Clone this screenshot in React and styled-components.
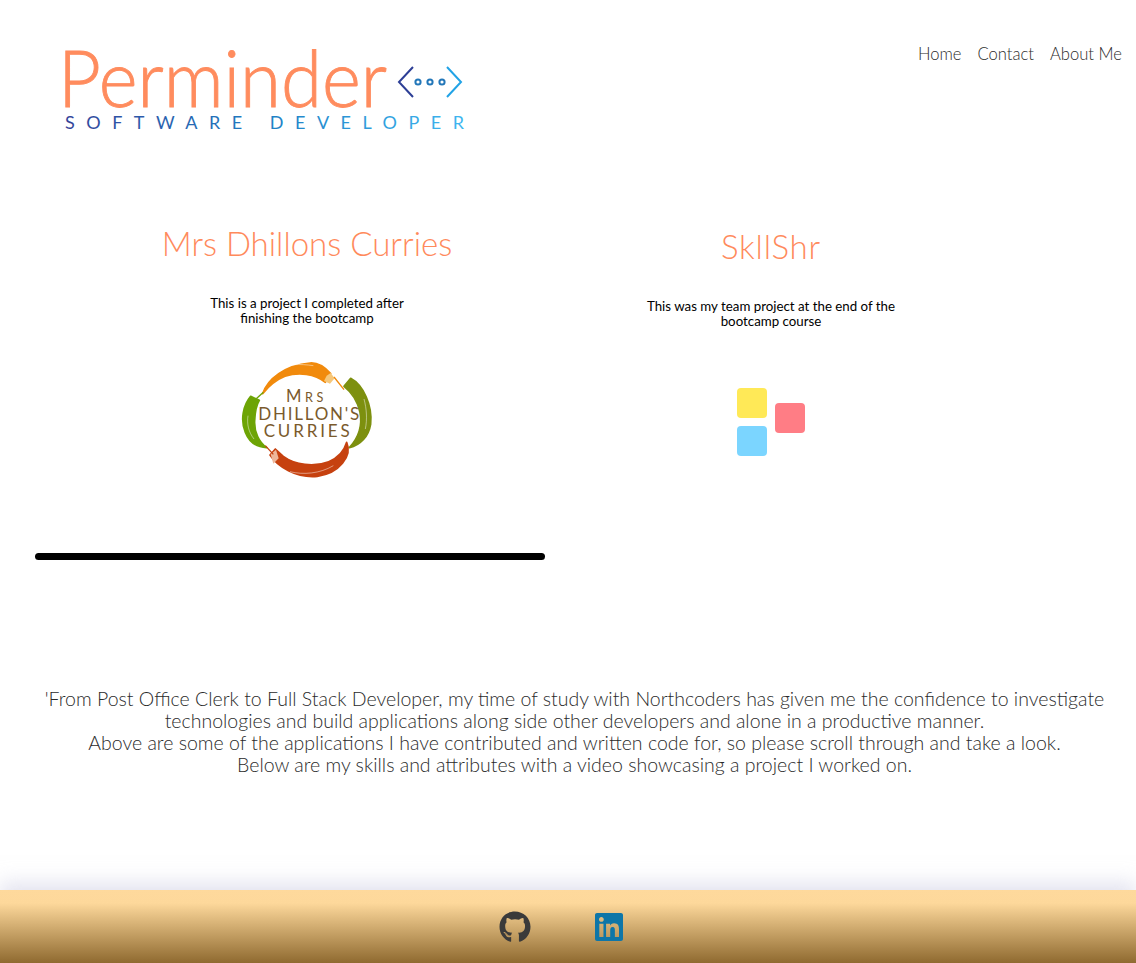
import React from "react";
import styled, { createGlobalStyle } from "styled-components";
import { FaGithub, FaLinkedin } from "react-icons/fa";

const Global = createGlobalStyle`
  html, body { margin: 0; padding: 0; background: #fff; }
  body { font-family: Lato, "Open Sans", "Liberation Sans", sans-serif; }
`;
const Page = styled.div`
  width: 1136px; height: 963px; display: flex; flex-direction: column; overflow: hidden;
`;
const Header = styled.header`
  display: flex; justify-content: space-between; align-items: flex-start;
  padding: 20px 14px 0 50px; height: 143px; box-sizing: border-box; flex: none;
`;
const Nav = styled.nav`
  display: flex; gap: 16px; margin-top: 24px;
`;
const NavLink = styled.a`
  font-size: 16.6px; font-weight: 300; line-height: 21px; color: #2b2b2b;
`;
const Track = styled.section`
  display: flex; align-items: center; padding-left: 75px; margin-top: 78px; flex: none;
`;
const Slide = styled.article`
  width: 464px; display: flex; flex-direction: column; align-items: center; text-align: center;
`;
const Title = styled.h2`
  margin: 0 0 31px; font-size: 33px; line-height: 44px; font-weight: 300; color: #ff8a5c;
  letter-spacing: ${(p) => p.$spacing || 0}px;
`;
const Blurb = styled.p`
  margin: 0; width: 280px; font-size: 13.3px; line-height: 15px; color: #000; font-weight: 400;
`;
const Figure = styled.div`
  height: ${(p) => p.$h}px; margin-top: 23px; display: flex; align-items: center; justify-content: center;
`;
const Scrollbar = styled.div`
  margin: 64px 0 0 35px; height: 7px; flex: none;
`;
const Thumb = styled.div`
  width: 510px; height: 7px; border-radius: 4px; background: #000;
`;
const Intro = styled.p`
  margin: 128px 20px 0 33px; flex: none; text-align: center; font-size: 19.5px; line-height: 22px;
  font-weight: 300; color: #2b2b2b; white-space: nowrap;
`;
const Footer = styled.footer`
  margin-top: auto; height: 73px; flex: none; display: flex; justify-content: center; align-items: center;
  gap: 62px; padding-right: 12px; box-sizing: border-box;
  background: linear-gradient(#fed99c 0%, #fdd89b 18%, #8f6a30 100%);
  box-shadow: 0 -8px 18px rgba(205, 205, 228, 0.55);
  color: #3a3a3a;
`;
const LinkedIn = styled(FaLinkedin)`
  color: #0e76a8;
`;

function Logo() {
  return (
    <svg width="430" height="120" viewBox="50 20 430 120" role="img" aria-label="Perminder logo">
      <defs>
        <linearGradient id="sub" x1="0" x2="1" y1="0" y2="0">
          <stop offset="0" stopColor="#33439a" />
          <stop offset="0.5" stopColor="#1f7fc4" />
          <stop offset="1" stopColor="#3fb6f0" />
        </linearGradient>
      </defs>
      <text x="58" y="107" fontSize="78" fontWeight="300" fill="#ff8c5e" stroke="#ff8c5e" strokeWidth="0.9" textLength="329" lengthAdjust="spacingAndGlyphs">Perminder</text>
      <text x="65" y="129" fontSize="18" fontWeight="400" fill="url(#sub)" textLength="399">SOFTWARE DEVELOPER</text>
      <path d="M413 67 L399 82 L413 97" fill="none" stroke="#2d3f96" strokeWidth="2" />
      <path d="M447 67 L461 82 L447 97" fill="none" stroke="#22a3e6" strokeWidth="2" />
      <circle cx="418" cy="82" r="2.6" fill="none" stroke="#2377b9" strokeWidth="2" />
      <circle cx="430" cy="82" r="2.6" fill="none" stroke="#2377b9" strokeWidth="2" />
      <circle cx="442" cy="82" r="2.6" fill="none" stroke="#2377b9" strokeWidth="2" />
    </svg>
  );
}

function CurriesLogo() {
  return (
    <svg width="170" height="140" viewBox="6 0 510 420" role="img" aria-label="Mrs Dhillon's Curries logo">
      <g strokeWidth="5" strokeLinejoin="round">
        <path d="M128 134 C142 90 195 48 270 42 C296 40 316 56 332 74 L316 100 C285 74 235 68 195 82 C165 94 146 112 128 134Z" fill="#f18a0c" stroke="#f18a0c" />
        <path d="M372 112 L392 88 C430 108 458 170 452 225 C446 262 422 288 388 296 C412 270 428 232 420 190 C412 152 395 130 372 112Z" fill="#7d900f" stroke="#7d900f" />
        <path d="M380 280 C398 320 358 374 292 382 C228 388 172 352 150 318 L166 300 L190 322 C225 348 282 355 326 338 C356 326 372 308 380 280Z" fill="#c6410f" stroke="#c6410f" />
        <path d="M118 154 L92 142 C70 168 60 212 76 250 C88 280 110 295 140 296 C118 280 102 250 104 215 C105 190 108 170 118 154Z" fill="#6da405" stroke="#6da405" />
      </g>
      <path d="M312 96 L320 80 L332 72 L344 88 L330 104Z" fill="#f6c77a" />
      <path d="M342 84 L372 122" stroke="#f18a0c" strokeWidth="4" fill="none" />
      <path d="M152 316 L168 302 L176 328 L160 344Z" fill="#eeb79a" />
      <path d="M136 290 L160 316" stroke="#c6410f" strokeWidth="4" fill="none" />
      <path d="M108 150 L130 130" stroke="#6da405" strokeWidth="4" fill="none" />
      <path d="M160 60 C200 45 240 44 280 50 M432 150 C440 180 442 210 436 240 M84 200 C80 225 86 250 102 270 M210 368 C250 378 300 374 340 350" stroke="#ffffff" strokeWidth="2" fill="none" opacity="0.7" />
      <text x="198" y="160" fontSize="50" fill="#7a5a2c" textLength="112">M<tspan fontSize="38">RS</tspan></text>
      <text x="115" y="212" fontSize="51" fill="#7a5a2c" textLength="303">DHILLON'S</text>
      <text x="131" y="263" fontSize="51" fill="#7a5a2c" textLength="258">CURRIES</text>
    </svg>
  );
}

function SkllShrLogo() {
  return (
    <svg width="70" height="76" viewBox="0 -7 70 76" role="img" aria-label="SkllShr logo">
      <rect x="1" y="0" width="30" height="30" rx="4" fill="#ffe957" />
      <rect x="39" y="15" width="30" height="30" rx="4" fill="#ff7d85" />
      <rect x="1" y="38" width="30" height="30" rx="4" fill="#7bd5ff" />
    </svg>
  );
}

export default function App() {
  return (
    <Page>
      <Global />
      <Header>
        <Logo />
        <Nav>
          <NavLink>Home</NavLink>
          <NavLink>Contact</NavLink>
          <NavLink>About Me</NavLink>
        </Nav>
      </Header>
      <Track>
        <Slide>
          <Title>Mrs Dhillons Curries</Title>
          <Blurb>This is a project I completed after<br />finishing the bootcamp</Blurb>
          <Figure $h={140}><CurriesLogo /></Figure>
        </Slide>
        <Slide>
          <Title $spacing={0.8}>SkllShr</Title>
          <Blurb>This was my team project at the end of the<br />bootcamp course</Blurb>
          <Figure $h={134}><SkllShrLogo /></Figure>
        </Slide>
      </Track>
      <Scrollbar><Thumb /></Scrollbar>
      <Intro>
        'From Post Office Clerk to Full Stack Developer, my time of study with Northcoders has given me the confidence to investigate<br />
        technologies and build applications along side other developers and alone in a productive manner.<br />
        Above are some of the applications I have contributed and written code for, so please scroll through and take a look.<br />
        Below are my skills and attributes with a video showcasing a project I worked on.
      </Intro>
      <Footer>
        <FaGithub size={32} />
        <LinkedIn size={32} />
      </Footer>
    </Page>
  );
}
